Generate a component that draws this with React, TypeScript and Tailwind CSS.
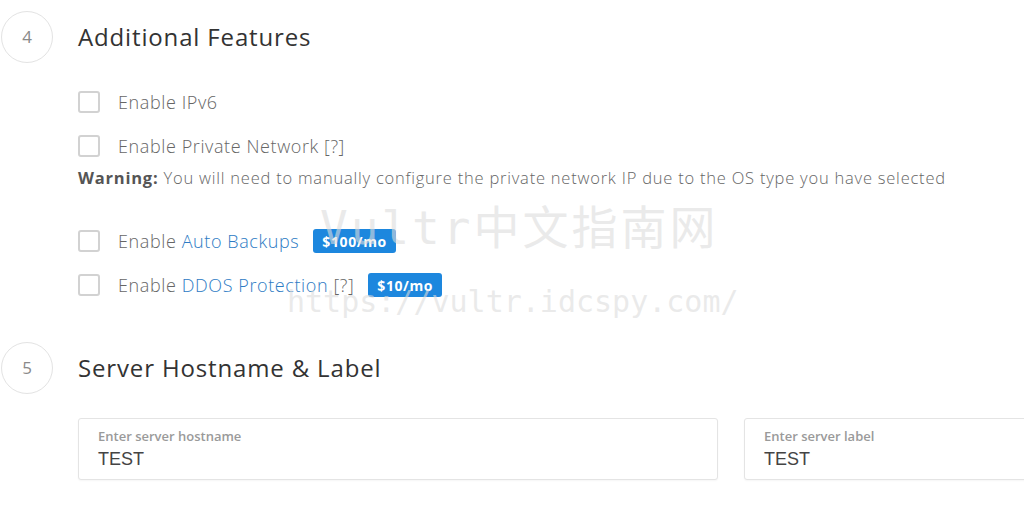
import React from 'react';

const font = { fontFamily: '"Open Sans", "Liberation Sans", sans-serif' };

const StepCircle: React.FC<{ n: number }> = ({ n }) => (
  <div className="w-[52px] h-[52px] shrink-0 rounded-full border border-[#e3e3e3] flex items-center justify-center text-[17px] text-[#8a8a8a]">
    {n}
  </div>
);

const Checkbox: React.FC = () => (
  <span className="w-[22px] h-[22px] shrink-0 rounded-[3px] border-2 border-[#d2d2d2] bg-white" />
);

const Badge: React.FC<{ children: React.ReactNode }> = ({ children }) => (
  <span className="ml-[14px] h-[24px] px-[9px] rounded-[3px] bg-[#1d87de] text-white text-[14px] font-bold tracking-[0.6px] flex items-center">
    {children}
  </span>
);

const Row: React.FC<{ children: React.ReactNode; className?: string }> = ({ children, className = '' }) => (
  <div className={`h-[44px] flex items-center ${className}`}>
    <Checkbox />
    <div className="ml-[18px] flex items-center text-[18px] text-[#666] font-light tracking-[0.6px]">{children}</div>
  </div>
);

const Field: React.FC<{ label: string; value: string }> = ({ label, value }) => (
  <div className="h-[62px] border border-[#e4e4e4] rounded-[3px] bg-white px-[19px] pt-[9px] shadow-[0_1px_2px_rgba(0,0,0,0.04)]">
    <div className="text-[13px] font-semibold text-[#9a9a9a] leading-[16px]">{label}</div>
    <div className="mt-[4px] text-[18px] text-[#444] leading-[22px]" style={{ fontFamily: '"Liberation Sans", Arial, sans-serif' }}>
      {value}
    </div>
  </div>
);

export default function App() {
  return (
    <div className="relative w-[1024px] h-[521px] overflow-hidden bg-white" style={font}>
      <div className="pl-[1px] pt-[11px]">
        {/* 4 - Additional Features */}
        <div className="flex items-center gap-[25px]">
          <StepCircle n={4} />
          <h2 className="text-[24px] text-[#333] font-normal tracking-[0.85px]">Additional Features</h2>
        </div>
        <div className="pl-[77px] mt-[17px]">
          <Row>Enable IPv6</Row>
          <Row>Enable Private Network [?]</Row>
          <p className="text-[16.5px] leading-[20px] text-[#666] font-light tracking-[0.78px] whitespace-nowrap">
            <span className="font-bold text-[#555]">Warning:</span> You will need to manually configure the private network IP due to the OS type you have selected
          </p>
          <Row className="mt-[31px]">
            Enable&nbsp;<span className="text-[#2d7bc4]">Auto Backups</span>
            <Badge>$100/mo</Badge>
          </Row>
          <Row>
            Enable&nbsp;<span className="text-[#2d7bc4]">DDOS Protection</span>&nbsp;[?]
            <Badge>$10/mo</Badge>
          </Row>
        </div>

        {/* 5 - Server Hostname & Label */}
        <div className="flex items-center gap-[25px] mt-[35px]">
          <StepCircle n={5} />
          <h2 className="text-[24px] text-[#333] font-normal tracking-[0.85px]">Server Hostname &amp; Label</h2>
        </div>
        <div className="pl-[77px] mt-[24px] grid grid-cols-[640px_640px] gap-[26px]">
          <Field label="Enter server hostname" value="TEST" />
          <Field label="Enter server label" value="TEST" />
        </div>
      </div>

      {/* watermark */}
      <div
        className="absolute left-[320px] top-[198px] text-[46px] leading-[60px] text-[#dcdcdc]/60 whitespace-nowrap pointer-events-none tracking-[3px]"
        style={{ fontFamily: '"DejaVu Sans Mono", "Noto Sans CJK SC", monospace' }}
      >
        Vultr中文指南网
      </div>
      <div
        className="absolute left-[287px] top-[282px] text-[30px] leading-[40px] text-[#dcdcdc]/60 whitespace-nowrap pointer-events-none"
        style={{ fontFamily: '"DejaVu Sans Mono", monospace' }}
      >
        https://vultr.idcspy.com/
      </div>
    </div>
  );
}
